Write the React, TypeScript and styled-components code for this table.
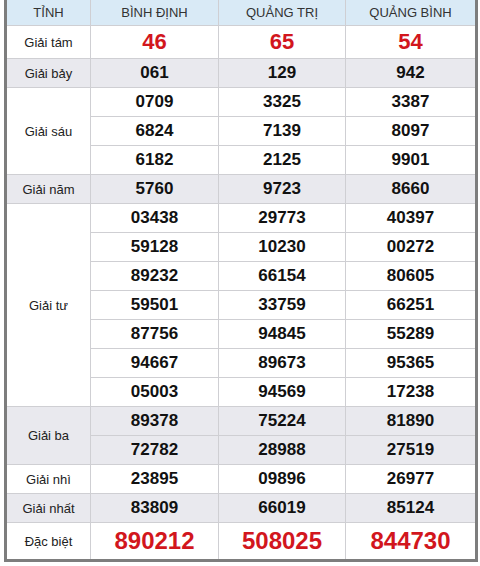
import React from "react";
import styled, { createGlobalStyle } from "styled-components";

const Global = createGlobalStyle`
  html, body { margin: 0; padding: 0; background: #ffffff; }
  body { font-family: "Liberation Sans", Arial, sans-serif; }
`;

const Page = styled.div`
  width: 480px;
  height: 566px;
  background: #fff;
  overflow: hidden;
`;

const Board = styled.div`
  margin-left: 4px;
  width: 468px;
  border: 3px solid #7d7d7d;
  border-top: none;
  background: #cfcfd3;
  display: flex;
  flex-direction: column;
  gap: 1px;
`;

const Row = styled.div<{ $h?: number }>`
  display: grid;
  grid-template-columns: 83px 127px 126px 129px;
  column-gap: 1px;
`;

const HeadCell = styled.div`
  height: 25px;
  background: #d9eaf6;
  color: #333;
  font-size: 13px;
  display: flex;
  align-items: center;
  justify-content: center;
`;

const Label = styled.div<{ $shade?: boolean }>`
  background: ${(p) => (p.$shade ? "#e9e9ee" : "#fff")};
  color: #222;
  font-size: 13px;
  display: flex;
  align-items: center;
  justify-content: center;
`;

const Stack = styled.div`
  display: flex;
  flex-direction: column;
  gap: 1px;
`;

const Num = styled.div<{ $shade?: boolean; $h: number; $size: number; $red?: boolean }>`
  height: ${(p) => p.$h}px;
  background: ${(p) => (p.$shade ? "#e9e9ee" : "#fff")};
  color: ${(p) => (p.$red ? "#d2161d" : "#111")};
  font-size: ${(p) => p.$size}px;
  font-weight: bold;
  display: flex;
  align-items: center;
  justify-content: center;
`;

type Group = {
  label: string;
  shade?: boolean;
  h: number;
  size: number;
  red?: boolean;
  cols: string[][];
};

const groups: Group[] = [
  { label: "Giải tám", h: 32, size: 22, red: true, cols: [["46"], ["65"], ["54"]] },
  { label: "Giải bảy", shade: true, h: 28, size: 17, cols: [["061"], ["129"], ["942"]] },
  {
    label: "Giải sáu",
    h: 28,
    size: 17,
    cols: [
      ["0709", "6824", "6182"],
      ["3325", "7139", "2125"],
      ["3387", "8097", "9901"],
    ],
  },
  { label: "Giải năm", shade: true, h: 28, size: 17, cols: [["5760"], ["9723"], ["8660"]] },
  {
    label: "Giải tư",
    h: 28,
    size: 17,
    cols: [
      ["03438", "59128", "89232", "59501", "87756", "94667", "05003"],
      ["29773", "10230", "66154", "33759", "94845", "89673", "94569"],
      ["40397", "00272", "80605", "66251", "55289", "95365", "17238"],
    ],
  },
  {
    label: "Giải ba",
    shade: true,
    h: 28,
    size: 17,
    cols: [
      ["89378", "72782"],
      ["75224", "28988"],
      ["81890", "27519"],
    ],
  },
  { label: "Giải nhì", h: 28, size: 17, cols: [["23895"], ["09896"], ["26977"]] },
  { label: "Giải nhất", shade: true, h: 28, size: 17, cols: [["83809"], ["66019"], ["85124"]] },
  { label: "Đặc biệt", h: 36, size: 24, red: true, cols: [["890212"], ["508025"], ["844730"]] },
];

export default function App() {
  return (
    <Page>
      <Global />
      <Board>
        <Row>
          <HeadCell>TỈNH</HeadCell>
          <HeadCell>BÌNH ĐỊNH</HeadCell>
          <HeadCell>QUẢNG TRỊ</HeadCell>
          <HeadCell>QUẢNG BÌNH</HeadCell>
        </Row>
        {groups.map((g) => (
          <Row key={g.label}>
            <Label $shade={g.shade}>{g.label}</Label>
            {g.cols.map((col, ci) => (
              <Stack key={ci}>
                {col.map((n, i) => (
                  <Num key={i} $shade={g.shade} $h={g.h} $size={g.size} $red={g.red}>
                    {n}
                  </Num>
                ))}
              </Stack>
            ))}
          </Row>
        ))}
      </Board>
    </Page>
  );
}
